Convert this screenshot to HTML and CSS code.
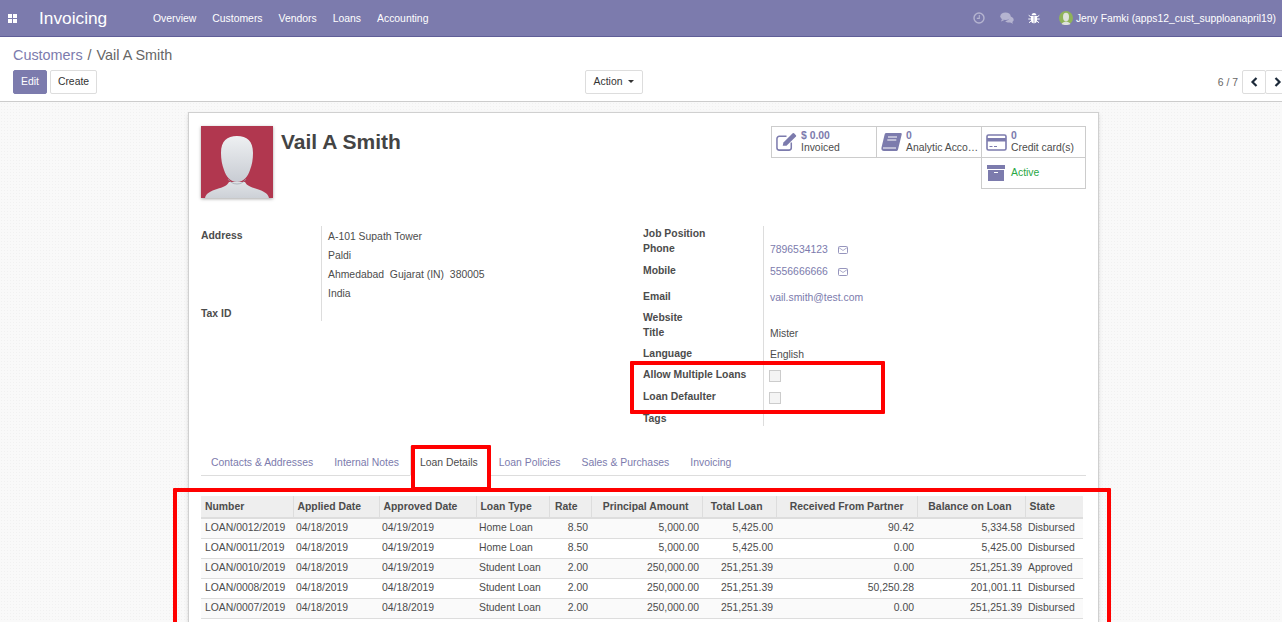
FILE: index.html
```html
<!DOCTYPE html>
<html lang="en">
<head>
    <meta charset="UTF-8">
    <meta name="viewport" content="width=device-width, initial-scale=1.0">
    <title>Vail A Smith - Invoicing</title>
    <link rel="stylesheet" href="styles.css">
</head>
<body>
    <header class="navbar">
        <svg class="apps-icon" width="10" height="9" viewBox="0 0 10 9"><path d="M0 0h4v4H0zM5 0h4v4H5zM0 5h4v4H0zM5 5h4v4H5z" fill="#fff"/></svg>
        <span class="brand">Invoicing</span>
        <nav class="menu">
            <a>Overview</a>
            <a>Customers</a>
            <a>Vendors</a>
            <a>Loans</a>
            <a>Accounting</a>
        </nav>
        <div class="systray">
            <svg class="tray-icon clock" width="12" height="12" viewBox="0 0 12 12"><circle cx="6" cy="6" r="5" fill="none" stroke="#b5b4d0" stroke-width="1.4"/><path d="M6.300 3v3.400H3.800" fill="none" stroke="#b5b4d0" stroke-width="1.100"/></svg>
            <svg class="tray-icon" width="14" height="12" viewBox="0 0 14 12"><ellipse cx="5.500" cy="4.200" rx="5.200" ry="3.800" fill="#b5b4d0"/><path d="M2 7l-1 2.500L4.500 8zM9.500 4.500c2.500.2 4.200 1.600 4.200 3.200 0 1-.6 1.700-1.400 2.300l.7 1.800-2.800-1.300c-2.300.3-4-.4-5-1.500 2.500-.1 4.500-2 4.300-4.500z" fill="#b5b4d0"/></svg>
            <svg class="tray-icon bug" width="12" height="12" viewBox="0 0 12 12"><path d="M3.500 3.200C3.800 1.700 4.800 1 6 1s2.200.7 2.500 2.200zM3 4h6v4.500c0 1.500-1.200 2.700-2.700 2.700h-.6C4.200 11.200 3 10 3 8.500z" fill="#fff"/><path d="M.7 3.300L3 5M11.300 3.300L9 5M.3 7H3M11.700 7H9M1 10.700L3.300 9M11 10.700L8.700 9" stroke="#fff" stroke-width="1"/><path d="M6 4v7" stroke="#7c7bad" stroke-width=".6"/></svg>
            <span class="user">
                <svg width="14" height="14" viewBox="0 0 14 14"><circle cx="7" cy="7" r="7" fill="#8fb35a"/><ellipse cx="7" cy="6" rx="3" ry="4.200" fill="#dfe3dc"/><path d="M2.500 13c1-1.800 2.800-2.600 4.500-2.600s3.500.8 4.500 2.600c-1.300.8-2.900 1-4.500 1s-3.200-.2-4.500-1z" fill="#dfe3dc"/></svg>
                Jeny Famki (apps12_cust_supploanapril19)
            </span>
        </div>
    </header>

    <section class="control-panel">
        <div class="breadcrumb"><a>Customers</a><span class="sep">/</span><span>Vail A Smith</span></div>
        <div class="buttons">
            <div class="left-btns">
                <button class="btn btn-primary">Edit</button>
                <button class="btn btn-create">Create</button>
            </div>
            <button class="btn action-btn">Action <i class="caret"></i></button>
            <div class="pager">
                <span class="pager-value">6 / 7</span>
                <div class="pager-btns">
                    <button class="btn pager-btn"><svg width="9" height="10" viewBox="0 0 9 10"><path d="M6.500 1L2.500 5l4 4" fill="none" stroke="#1d2a3a" stroke-width="2.200"/></svg></button>
                    <button class="btn pager-btn"><svg width="9" height="10" viewBox="0 0 9 10"><path d="M2.500 1l4 4-4 4" fill="none" stroke="#1d2a3a" stroke-width="2.200"/></svg></button>
                </div>
            </div>
        </div>
    </section>

    <main class="content">
        <div class="sheet">
            <div class="sheet-head">
                <svg class="avatar" width="72" height="72" viewBox="0 0 72 72">
                    <defs>
                        <linearGradient id="face" x1="0" y1="0" x2="0" y2="1"><stop offset="0" stop-color="#eef0f2"/><stop offset="1" stop-color="#c8ccd3"/></linearGradient>
                        <linearGradient id="body" x1="0" y1="0" x2="0" y2="1"><stop offset="0" stop-color="#dfe2e6"/><stop offset="1" stop-color="#cdd1d7"/></linearGradient>
                    </defs>
                    <rect width="72" height="72" fill="#b1374f"/>
                    <path d="M4 72c1-5 6-7 12-9 6-2 10-3 12-7h16c2 4 6 5 12 7 6 2 11 4 12 9z" fill="url(#body)"/>
                    <path d="M36 10c10 0 16 5 16 17 0 6-1 12-3 17-2 6-6 12-13 12s-11-6-13-12c-2-5-3-11-3-17 0-12 6-17 16-17z" fill="url(#face)"/>
                    <path d="M27 53c2 3 5 5 9 5s7-2 9-5" fill="none" stroke="#9aa0ab" stroke-width=".7"/>
                </svg>
                <h1 class="partner-name">Vail A Smith</h1>
                <div class="stat-buttons">
                    <div class="stat">
                        <svg width="21" height="20" viewBox="0 0 22 20"><path d="M16 10.500V16a2.500 2.500 0 0 1-2.500 2.500H3.500A2.500 2.500 0 0 1 1 16V6.500A2.500 2.500 0 0 1 3.500 4H11" fill="none" stroke="#7c7bad" stroke-width="1.600"/><path d="M7 14l.8-3.600L17.500 .8a1 1 0 0 1 1.400 0l2 2a1 1 0 0 1 0 1.400L11 14z" fill="#7c7bad"/></svg>
                        <div class="stat-text"><b>$ 0.00</b><span>Invoiced</span></div>
                    </div>
                    <div class="stat">
                        <svg width="21" height="20" viewBox="0 0 21 20"><path d="M5 1h14.500c1 0 1.500.7 1.200 1.600L17 17.500c-.3 1-1 1.500-2 1.500H3c-2 0-3-1.500-2.500-3.500L3.500 3C3.800 1.800 4.200 1 5 1z" fill="#7c7bad"/><path d="M7 5h9M6.300 8h9" stroke="#fff" stroke-width="1"/><path d="M2 16h13" stroke="#fff" stroke-width="1"/></svg>
                        <div class="stat-text"><b>0</b><span>Analytic Acco…</span></div>
                    </div>
                    <div class="stat">
                        <svg width="21" height="17" viewBox="0 0 21 17"><rect x="1" y="1" width="19" height="15" rx="1.500" fill="none" stroke="#7c7bad" stroke-width="1.600"/><path d="M1 4h19v3.500H1z" fill="#7c7bad"/><path d="M3.500 12.500h3M8 12.500h3" stroke="#7c7bad" stroke-width="1"/></svg>
                        <div class="stat-text"><b>0</b><span>Credit card(s)</span></div>
                    </div>
                    <div class="stat stat-active">
                        <svg width="18" height="16" viewBox="0 0 18 16"><path d="M0 0h18v4H0zM1 5h16v11H1z" fill="#7c7bad"/><path d="M7 7.500h4" stroke="#fff" stroke-width="1"/></svg>
                        <span class="active-label">Active</span>
                    </div>
                </div>
            </div>

            <div class="groups">
                <div class="group group-left">
                    <div class="labels">
                        <label class="address-label">Address</label>
                        <label class="tax-label">Tax ID</label>
                    </div>
                    <div class="values address">
                        <div>A-101 Supath Tower</div>
                        <div>Paldi</div>
                        <div>Ahmedabad&nbsp; Gujarat (IN)&nbsp; 380005</div>
                        <div>India</div>
                    </div>
                </div>
                <div class="group group-right">
                    <div class="field row-s"><label>Job Position</label><div></div></div>
                    <div class="field row-l"><label>Phone</label><div class="value link">7896534123 <svg class="mail" width="10" height="8" viewBox="0 0 10 8"><rect x=".5" y=".5" width="9" height="7" rx="1" fill="none" stroke="#7c7bad"/><path d="M.8 1.500L5 4.500l4.200-3" fill="none" stroke="#7c7bad" stroke-width=".8"/></svg></div></div>
                    <div class="field row-xl"><label>Mobile</label><div class="value link">5556666666 <svg class="mail" width="10" height="8" viewBox="0 0 10 8"><rect x=".5" y=".5" width="9" height="7" rx="1" fill="none" stroke="#7c7bad"/><path d="M.8 1.500L5 4.500l4.200-3" fill="none" stroke="#7c7bad" stroke-width=".8"/></svg></div></div>
                    <div class="field row-m"><label>Email</label><div class="value link">vail.smith@test.com</div></div>
                    <div class="field row-s"><label>Website</label><div></div></div>
                    <div class="field row-m"><label>Title</label><div class="value">Mister</div></div>
                    <div class="field row-m"><label>Language</label><div class="value">English</div></div>
                    <div class="field row-l"><label>Allow Multiple Loans</label><div class="value"><span class="checkbox"></span></div></div>
                    <div class="field row-l"><label>Loan Defaulter</label><div class="value"><span class="checkbox"></span></div></div>
                    <div class="field row-s"><label>Tags</label><div></div></div>
                </div>
            </div>

            <ul class="tabs">
                <li>Contacts &amp; Addresses</li>
                <li>Internal Notes</li>
                <li class="active">Loan Details</li>
                <li>Loan Policies</li>
                <li>Sales &amp; Purchases</li>
                <li>Invoicing</li>
            </ul>

            <table class="loans">
                <thead>
                    <tr>
                        <th class="c-number">Number</th>
                        <th class="c-applied">Applied Date</th>
                        <th class="c-approved">Approved Date</th>
                        <th class="c-type">Loan Type</th>
                        <th class="c-rate num">Rate</th>
                        <th class="c-principal num">Principal Amount</th>
                        <th class="c-total num">Total Loan</th>
                        <th class="c-received num">Received From Partner</th>
                        <th class="c-balance num">Balance on Loan</th>
                        <th class="c-state">State</th>
                    </tr>
                </thead>
                <tbody>
                    <tr><td>LOAN/0012/2019</td><td>04/18/2019</td><td>04/19/2019</td><td>Home Loan</td><td class="num">8.50</td><td class="num">5,000.00</td><td class="num">5,425.00</td><td class="num">90.42</td><td class="num">5,334.58</td><td>Disbursed</td></tr>
                    <tr><td>LOAN/0011/2019</td><td>04/18/2019</td><td>04/19/2019</td><td>Home Loan</td><td class="num">8.50</td><td class="num">5,000.00</td><td class="num">5,425.00</td><td class="num">0.00</td><td class="num">5,425.00</td><td>Disbursed</td></tr>
                    <tr><td>LOAN/0010/2019</td><td>04/18/2019</td><td>04/19/2019</td><td>Student Loan</td><td class="num">2.00</td><td class="num">250,000.00</td><td class="num">251,251.39</td><td class="num">0.00</td><td class="num">251,251.39</td><td>Approved</td></tr>
                    <tr><td>LOAN/0008/2019</td><td>04/18/2019</td><td>04/18/2019</td><td>Student Loan</td><td class="num">2.00</td><td class="num">250,000.00</td><td class="num">251,251.39</td><td class="num">50,250.28</td><td class="num">201,001.11</td><td>Disbursed</td></tr>
                    <tr><td>LOAN/0007/2019</td><td>04/18/2019</td><td>04/18/2019</td><td>Student Loan</td><td class="num">2.00</td><td class="num">250,000.00</td><td class="num">251,251.39</td><td class="num">0.00</td><td class="num">251,251.39</td><td>Disbursed</td></tr>
                </tbody>
            </table>
        </div>
    </main>

    <!-- annotation boxes drawn over the screenshot -->
    <div class="mark mark-fields"></div>
    <div class="mark mark-tab"></div>
    <div class="mark mark-table"></div>
</body>
</html>
```

FILE: styles.css
```css
* {
    margin: 0;
    padding: 0;
    box-sizing: border-box;
}

html, body {
    height: 622px;
    overflow: hidden;
}

body {
    position: relative;
    font-family: 'Liberation Sans', Arial, sans-serif;
    font-size: 10.4px;
    color: #4c4c4c;
    background: #fff;
}

/* top bar */
.navbar {
    height: 37px;
    display: flex;
    align-items: center;
    background: #7c7bad;
    border-bottom: 1px solid #5f5e97;
    color: #fff;
    padding-right: 6px;
}

.apps-icon {
    margin-left: 8px;
}

.brand {
    margin-left: 21px;
    width: 114px;
    font-size: 17.3px;
}

.menu {
    display: flex;
    gap: 16px;
}

.systray {
    margin-left: auto;
    display: flex;
    align-items: center;
}

.tray-icon {
    margin-right: 14px;
}

.tray-icon.clock {
    margin-right: 15px;
}

.tray-icon.bug {
    margin-right: 19px;
}

.user {
    display: flex;
    align-items: center;
    gap: 3px;
    font-size: 10.35px;
}

/* breadcrumb and buttons */
.control-panel {
    height: 65px;
    padding: 10px 0 0 13px;
    border-bottom: 1px solid #ccc;
    background: #fff;
}

.breadcrumb {
    height: 23px;
    font-size: 14.4px;
    color: #666;
}

.breadcrumb a {
    color: #7c7bad;
}

.breadcrumb .sep {
    margin: 0 5px;
}

.buttons {
    display: flex;
    align-items: center;
    height: 24px;
}

.left-btns {
    width: 572px;
    display: flex;
    gap: 3px;
}

.btn {
    height: 24px;
    padding: 0 0 1px;
    font-family: inherit;
    font-size: 10.4px;
    color: #333;
    background: #fff;
    border: 1px solid #ddd;
    border-radius: 2px;
    white-space: nowrap;
}

.btn-primary {
    width: 34px;
    color: #fff;
    background: #7c7bad;
    border-color: #7c7bad;
}

.btn-create {
    width: 47px;
}

.action-btn {
    width: 58px;
}

.caret {
    display: inline-block;
    margin-left: 3px;
    vertical-align: 2px;
    border-top: 3px solid #333;
    border-left: 3px solid transparent;
    border-right: 3px solid transparent;
}

.pager {
    margin-left: auto;
    display: flex;
    align-items: center;
    gap: 4px;
}

.pager-value {
    color: #666;
}

.pager-btns {
    display: flex;
    width: 40px;
}

.pager-btn {
    width: 24px;
    flex: none;
    padding: 0;
    display: flex;
    align-items: center;
    justify-content: center;
}

.pager-btn + .pager-btn {
    margin-left: -1px;
}

/* form */
.content {
    height: 520px;
    padding-top: 10px;
    background-color: #f9f9f9;
    background-image: radial-gradient(#f1f1f1 0.6px, transparent 0.7px);
    background-size: 3px 3px;
}

.sheet {
    width: 911px;
    min-height: 560px;
    margin-left: 188px;
    padding: 13px 12px 0 12px;
    background: #fff;
    border: 1px solid #d0d0d0;
    box-shadow: 0 2px 4px rgba(0, 0, 0, 0.12);
}

.sheet-head {
    display: flex;
    height: 100px;
}

.avatar {
    box-shadow: 0 1px 3px rgba(0, 0, 0, 0.35);
}

.partner-name {
    margin-left: 8px;
    font-size: 21px;
    line-height: 32px;
    color: #444;
}

.stat-buttons {
    margin-left: auto;
    margin-right: 1px;
    width: 314px;
    height: 63px;
    display: grid;
    grid-template-columns: 105px 105px 104px;
    grid-template-rows: 32px 31px;
}

.stat {
    display: flex;
    align-items: center;
    gap: 4px;
    padding-left: 4px;
    border: 1px solid #ccc;
    margin-right: -1px;
    line-height: 12px;
    overflow: hidden;
}

.stat svg {
    flex: none;
}

.stat-text {
    display: flex;
    flex-direction: column;
    min-width: 0;
    white-space: nowrap;
}

.stat-text b {
    color: #7c7bad;
}

.stat-active {
    grid-column: 3;
    margin-top: -1px;
    padding-left: 5px;
    gap: 6px;
}

.active-label {
    color: #28a745;
}

.groups {
    display: flex;
}

.group-left {
    width: 442px;
    height: 95px;
    display: flex;
}

.labels {
    width: 121px;
    border-right: 1px solid #ddd;
    padding-top: 3px;
    font-weight: bold;
}

label {
    display: block;
    font-weight: bold;
    line-height: 13px;
}

.tax-label {
    margin-top: 65px;
}

.address {
    padding: 1px 0 0 6px;
    line-height: 19px;
}

.field {
    display: grid;
    grid-template-columns: 120px 1fr;
    width: 300px;
}

.field > div {
    border-left: 1px solid #ddd;
    padding-left: 6px;
}

.field label {
    line-height: 15px;
    white-space: nowrap;
}

.value {
    padding-top: 1px;
    line-height: 15px;
}

.row-s { height: 15px; }
.row-m { height: 21px; }
.row-l { height: 22px; }
.row-xl { height: 26px; }

.link {
    color: #7c7bad;
}

.mail {
    margin-left: 7px;
    vertical-align: -1px;
    opacity: 0.8;
}

.checkbox {
    display: block;
    width: 12px;
    height: 12px;
    margin: 2px 0 0 -1px;
    background: #f4f4f4;
    border: 1px solid #ccc;
}

/* tabs */
.tabs {
    display: flex;
    gap: 1px;
    height: 30px;
    margin-top: 20px;
    list-style: none;
    border-bottom: 1px solid #ddd;
}

.tabs li {
    padding: 10px 10px 0;
    line-height: 14px;
    color: #7c7bad;
    white-space: nowrap;
}

.tabs .active {
    color: #4c4c4c;
    background: #fff;
    border: 1px solid #ddd;
    border-bottom-color: #fff;
    height: 30px;
    padding: 9px 9px 0;
}

/* loans table */
.loans {
    width: 882px;
    margin-top: 20px;
    table-layout: fixed;
    border-collapse: collapse;
}

.loans th {
    height: 22px;
    padding: 0 4px 1px;
    text-align: left;
    font-weight: bold;
    white-space: nowrap;
    background: #eee;
    border-left: 1px solid #ddd;
    border-bottom: 2px solid #ddd;
}

.loans th:first-child {
    border-left: 0;
}

.loans td {
    height: 20px;
    padding: 0 3px 2px;
    white-space: nowrap;
    background: #fff;
    border-bottom: 1px solid #ddd;
}

.loans td:first-child {
    padding-left: 4px;
}

.loans tbody tr:nth-child(odd) td {
    background: #fafafa;
}

.loans .num {
    text-align: right;
}

.loans th.num {
    padding-right: 13px;
}

.c-number { width: 92px; }
.c-applied { width: 86px; }
.c-approved { width: 97px; }
.c-type { width: 73px; }
.c-rate { width: 42px; }
.c-principal { width: 111px; }
.c-total { width: 74px; }
.c-received { width: 141px; }
.c-balance { width: 108px; }
.c-state { width: 58px; }

/* red annotation boxes */
.mark {
    position: absolute;
    border: 4px solid #f00;
    border-radius: 1px;
}

.mark-fields {
    left: 630px;
    top: 361px;
    width: 255px;
    height: 53px;
}

.mark-tab {
    left: 411px;
    top: 445px;
    width: 80px;
    height: 46px;
}

.mark-table {
    left: 173px;
    top: 488px;
    width: 938px;
    height: 160px;
}
```
